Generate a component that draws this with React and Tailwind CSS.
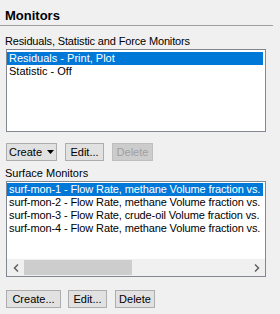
import React from "react";

const surfaceRows = [
  "surf-mon-1 - Flow Rate, methane Volume fraction vs.",
  "surf-mon-2 - Flow Rate, methane Volume fraction vs.",
  "surf-mon-3 - Flow Rate, crude-oil Volume fraction vs.",
  "surf-mon-4 - Flow Rate, methane Volume fraction vs.",
];

const Btn = ({ children, disabled, className = "" }) => (
  <button
    className={`flex h-[18px] items-center justify-center border text-[11px] leading-[16px] ${
      disabled
        ? "border-[#bfbfbf] bg-[#cccccc] text-[#a0a0a0]"
        : "border-[#adadad] bg-[#e1e1e1] text-black"
    } ${className}`}
  >
    {children}
  </button>
);

const App = () => {
  return (
    <div
      className="h-[314px] w-[280px] overflow-hidden bg-[#f0f0f0] text-black"
      style={{ fontFamily: '"Liberation Sans", Arial, sans-serif' }}
    >
      <div className="mr-[7px] border-b border-[#a0a0a0] pl-[5px] pt-[8px] pb-[2px]">
        <div className="text-[13px] font-bold leading-[15px]">Monitors</div>
      </div>

      <div className="pl-[6px] pr-[14px]">
        <div className="mt-[8px] -ml-[1px] text-[11px] leading-[15px] tracking-[-0.15px]">
          Residuals, Statistic and Force Monitors
        </div>
        <div className="h-[83px] border border-[#828790] bg-white pt-[2px] pr-[2px] text-[11px] leading-[13px]">
          <div className="bg-[#0078d7] pl-[2px] text-white">Residuals - Print, Plot</div>
          <div className="pl-[2px]">Statistic - Off</div>
        </div>

        <div className="mt-[11px] flex gap-[8px]">
          <Btn className="w-[51px] gap-[5px]">
            Create
            <svg width="7" height="4" viewBox="0 0 7 4">
              <path d="M0 0h7L3.5 4z" fill="#000" />
            </svg>
          </Btn>
          <Btn className="w-[39px]">Edit...</Btn>
          <Btn disabled className="w-[41px]">
            Delete
          </Btn>
        </div>

        <div className="mt-[4px] -ml-[1px] text-[11px] leading-[16px]">Surface Monitors</div>
        <div className="flex h-[96px] flex-col border border-[#828790] bg-white text-[11px] leading-[13px]">
          <div className="min-h-0 flex-1 overflow-hidden pt-[1px] pr-[2px]">
            {surfaceRows.map((r, i) => (
              <div
                key={i}
                className={`whitespace-nowrap pl-[2px] tracking-[-0.12px] ${
                  i === 0 ? "bg-[#0078d7] text-white" : ""
                }`}
              >
                {r}
              </div>
            ))}
          </div>
          <div className="flex h-[17px] shrink-0 items-center bg-[#f0f0f0]">
            <div className="flex w-[17px] justify-center">
              <svg width="6" height="8" viewBox="0 0 6 8">
                <path d="M5 0.5L1.5 4 5 7.5" fill="none" stroke="#606060" strokeWidth="1.5" />
              </svg>
            </div>
            <div className="flex-1">
              <div className="h-[15px] w-[108px] bg-[#cdcdcd]" />
            </div>
            <div className="flex w-[17px] justify-center">
              <svg width="6" height="8" viewBox="0 0 6 8">
                <path d="M1 0.5L4.5 4 1 7.5" fill="none" stroke="#606060" strokeWidth="1.5" />
              </svg>
            </div>
          </div>
        </div>

        <div className="mt-[13px] flex gap-[7px]">
          <Btn className="w-[55px]">Create...</Btn>
          <Btn className="w-[39px]">Edit...</Btn>
          <Btn className="ml-[1px] w-[40px]">Delete</Btn>
        </div>
      </div>
    </div>
  );
};

export default App;
